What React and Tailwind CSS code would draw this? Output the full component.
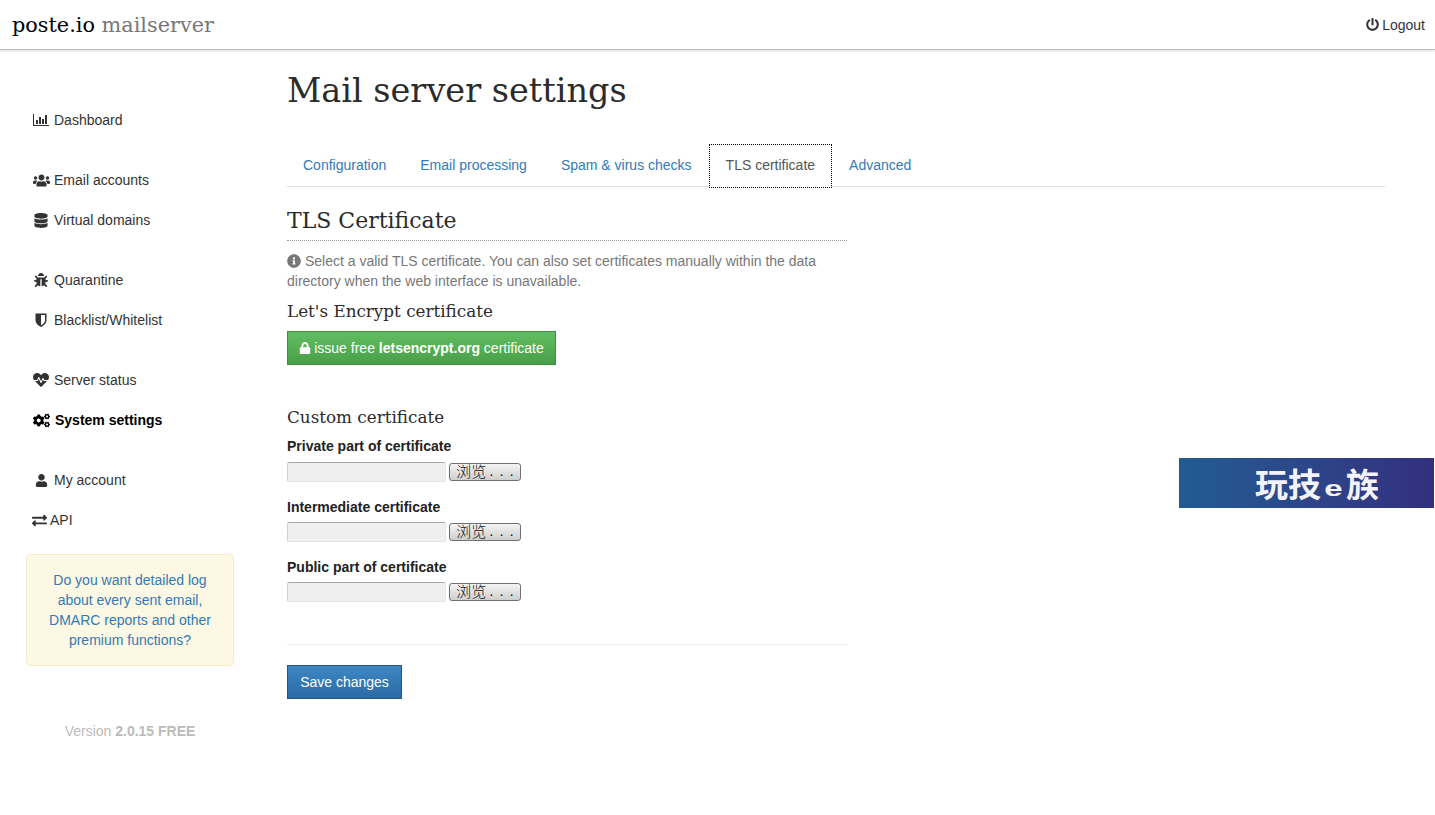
import React from "react";
import {
  FaUsers,
  FaDatabase,
  FaBug,
  FaHeartbeat,
  FaCogs,
  FaUser,
  FaExchangeAlt,
  FaInfoCircle,
  FaLock,
  FaPowerOff,
} from "react-icons/fa";

const slab = "font-['DejaVu_Serif','Liberation_Serif',serif]";

// FA4 style bar chart, the newer icon sets dropped the thin axis
const ChartIcon = ({ className }) => (
  <svg viewBox="0 0 16 14" className={className} fill="currentColor">
    <path d="M0 1h1v11h15v1H0z" />
    <path d="M3 7h2v4H3zM6 4h2v7H6zM9 6h2v5H9zM12 2h2v9h-2z" />
  </svg>
);

// half filled shield
const ShieldIcon = ({ className }) => (
  <svg viewBox="0 0 14 14" className={className} fill="currentColor">
    <path
      fillRule="evenodd"
      d="M1.5 0.5h11v7c0 3-2.5 5-5.500 6.500-3-1.500-5.500-3.500-5.500-6.500zM7 2v10.300c2-1.100 4-2.600 4-4.800V2z"
    />
  </svg>
);

const navGroups = [
  [{ label: "Dashboard", icon: ChartIcon, size: "w-[16px] h-[14px]" }],
  [
    { label: "Email accounts", icon: FaUsers, size: "w-[17px] h-[17px]" },
    { label: "Virtual domains", icon: FaDatabase, size: "w-[14px] h-[15px]" },
  ],
  [
    { label: "Quarantine", icon: FaBug, size: "w-[14px] h-[14px]" },
    { label: "Blacklist/Whitelist", icon: ShieldIcon, size: "w-[14px] h-[14px]" },
  ],
  [
    { label: "Server status", icon: FaHeartbeat, size: "w-[16px] h-[16px]" },
    { label: "System settings", icon: FaCogs, size: "w-[17px] h-[17px]", active: true },
  ],
  [
    { label: "My account", icon: FaUser, size: "w-[13px] h-[13px]" },
    { label: "API", icon: FaExchangeAlt, size: "w-[15px] h-[15px]", narrow: true },
  ],
];

const tabs = ["Configuration", "Email processing", "Spam & virus checks", "TLS certificate", "Advanced"];

const certFields = ["Private part of certificate", "Intermediate certificate", "Public part of certificate"];

const FileField = ({ label, first }) => (
  <div className="h-[60px]">
    <div className={`h-[22px] leading-[20px] font-bold text-[#222] ${first ? "" : "pt-[1px]"}`}>{label}</div>
    <div className="flex items-center mt-[4px]">
      <div className="w-[159px] h-[20px] bg-[#efefef] border border-[#e4e4e4] border-t-[#a9a9a9] border-l-[#d0d0d0] rounded-[2px]" />
      <button className="ml-[3px] w-[72px] h-[18px] pb-[3px] flex items-center justify-center rounded-[3px] border border-[#707070] bg-gradient-to-b from-[#f4f4f4] to-[#cfcfcf] text-[15px] leading-none text-[#111] font-['Noto_Sans_CJK_SC',sans-serif] font-light">
        浏览<span className="ml-[3px] tracking-[6px] -mr-[6px] font-['Liberation_Sans',sans-serif]">...</span>
      </button>
    </div>
  </div>
);

const App = () => {
  return (
    <div className="min-h-[815px] bg-white text-[14px] leading-[20px] text-[#333] font-['Liberation_Sans',Arial,sans-serif] relative">
      {/* top bar */}
      <header className="h-[50px] border-b border-[#bbb] shadow-[0_1px_3px_rgba(0,0,0,0.15)] flex items-center justify-between pl-[12px] pr-[10px]">
        <div className={`${slab} text-[20.800px] text-black`}>
          poste.io <span className="text-[#777]">mailserver</span>
        </div>
        <a className="flex items-center gap-[3px] text-[#333]">
          <FaPowerOff className="text-[13px]" /> Logout
        </a>
      </header>

      <div className="flex">
        {/* sidebar */}
        <aside className="w-[287px] shrink-0 pt-[50px] pl-[26px] pr-[53px]">
          {navGroups.map((group, i) => (
            <ul key={i} className="mb-[20px] last:mb-[14px]">
              {group.map((item) => (
                <li
                  key={item.label}
                  className={`h-[40px] flex items-center pl-[7px] ${item.active ? "font-bold text-black" : ""}`}
                >
                  <span
                    className={`${item.narrow ? "w-[17px]" : item.active ? "w-[22px]" : "w-[21px]"} flex justify-center shrink-0 pr-[5px]`}
                  >
                    <item.icon className={`${item.size} shrink-0`} />
                  </span>
                  {item.label}
                </li>
              ))}
            </ul>
          ))}
          <div className="-mt-[6px] h-[112px] border border-[#faebcc] bg-[#fcf8e3] rounded-[4px] px-[15px] py-[15px] text-center text-[#337ab7]">
            Do you want detailed log about every sent email, DMARC reports and other premium functions?
          </div>
          <div className="mt-[55px] text-center text-[#bbb]">
            Version <b>2.0.15 FREE</b>
          </div>
        </aside>

        {/* main content */}
        <main className="flex-1 pr-[50px]">
          <h1 className={`${slab} text-[33.500px] leading-[40px] mt-[21px] text-[#2b2b2b]`}>Mail server settings</h1>

          <nav className="mt-[34px] h-[42px] flex border-b border-[#ddd]">
            {tabs.map((tab) =>
              tab === "TLS certificate" ? (
                <span
                  key={tab}
                  className="h-[42px] px-[16px] mr-[2px] leading-[40px] text-[#555] bg-white outline-1 outline-dotted outline-black"
                >
                  {tab}
                </span>
              ) : (
                <a key={tab} className="h-[42px] px-[16px] mr-[2px] leading-[40px] text-[#337ab7]">
                  {tab}
                </a>
              )
            )}
          </nav>

          <section className="w-[560px]">
            <h2 className={`${slab} text-[22px] leading-[26px] mt-[21px] pb-[6px] border-b border-dotted border-[#999] text-[#2b2b2b]`}>
              TLS Certificate
            </h2>
            <p className="mt-[10px] text-[#777]">
              <FaInfoCircle className="inline text-[14px] align-[-2px] mr-[4px]" />
              Select a valid TLS certificate. You can also set certificates manually within the data directory when the web interface is unavailable.
            </p>
            <h3 className={`${slab} text-[16.800px] leading-[20px] mt-[10px] text-[#2b2b2b]`}>Let's Encrypt certificate</h3>
            <button className="mt-[10px] h-[34px] w-[269px] flex items-center justify-center gap-[3px] border border-[#3e8f3e] bg-gradient-to-b from-[#62bd62] to-[#48a048] text-white">
              <FaLock className="text-[12px]" />
              <span>
                issue free <b>letsencrypt.org</b> certificate
              </span>
            </button>

            <h3 className={`${slab} text-[16.800px] leading-[20px] mt-[42px] text-[#2b2b2b]`}>Custom certificate</h3>
            <div className="mt-[9px]">
              {certFields.map((label, i) => (
                <FileField key={label} label={label} first={i === 0} />
              ))}
            </div>

            <div className="mt-[28px] border-t border-[#eee]" />
            <button className="mt-[20px] h-[34px] w-[115px] border border-[#245580] bg-gradient-to-b from-[#3d87c6] to-[#2b6ba4] text-white">
              Save changes
            </button>
          </section>
        </main>
      </div>

      {/* floating banner */}
      <div className="absolute left-[1179px] top-[458px] w-[255px] h-[50px] bg-gradient-to-r from-[#1f5c93] to-[#322f7f] flex items-center pl-[76px] text-[#f2f4fa] text-[33px] leading-none font-bold font-['Noto_Sans_CJK_SC',sans-serif]">
        玩技
        <span className="w-[25px] text-center text-[22px] scale-x-150 self-end mb-[8px] font-['Liberation_Sans',sans-serif]">e</span>
        族
      </div>
    </div>
  );
};

export default App;
